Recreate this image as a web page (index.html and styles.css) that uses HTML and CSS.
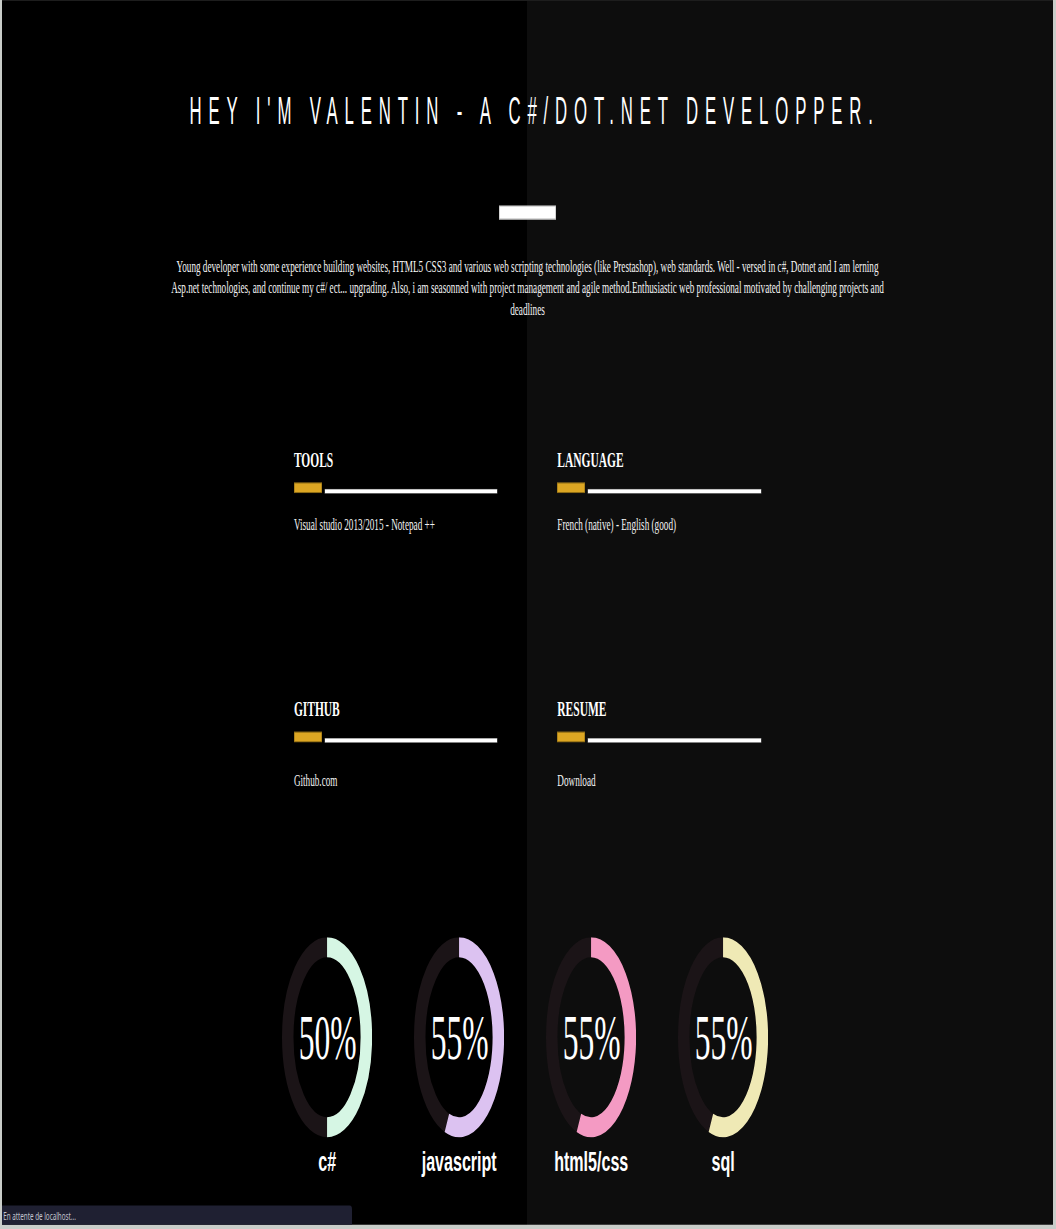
FILE: index.html
```html
<!DOCTYPE html>
<html lang="en">
<head>
<meta charset="utf-8">
<title>Valentin - C#/Dot.net developer</title>
<link rel="stylesheet" href="styles.css">
</head>
<body>
<div class="page">
  <h1 class="title">HEY I'M VALENTIN - A C#/DOT.NET DEVELOPPER.</h1>
  <div class="rule"></div>
  <p class="intro">Young developer with some experience building websites, HTML5 CSS3 and various web scripting technologies (like Prestashop), web standards. Well - versed in c#, Dotnet and I am lerning Asp.net technologies, and continue my c#/ ect... upgrading. Also, i am seasonned with project management and agile method.Enthusiastic web professional motivated by challenging projects and deadlines</p>

  <div class="skills">
    <section class="skill">
      <h3 class="skill-title">TOOLS</h3>
      <div class="bar"><span class="bar-gold"></span><span class="bar-line"></span></div>
      <p class="skill-text">Visual studio 2013/2015 - Notepad ++</p>
    </section>
    <section class="skill">
      <h3 class="skill-title">LANGUAGE</h3>
      <div class="bar"><span class="bar-gold"></span><span class="bar-line"></span></div>
      <p class="skill-text">French (native) - English (good)</p>
    </section>
    <section class="skill">
      <h3 class="skill-title">GITHUB</h3>
      <div class="bar"><span class="bar-gold"></span><span class="bar-line"></span></div>
      <p class="skill-text skill-link"><a href="#">Github.com</a></p>
    </section>
    <section class="skill">
      <h3 class="skill-title">RESUME</h3>
      <div class="bar"><span class="bar-gold"></span><span class="bar-line"></span></div>
      <p class="skill-text skill-link"><a href="#">Download</a></p>
    </section>
  </div>

  <div class="gauges">
    <div class="gauge">
      <div class="dial">
        <svg width="157" height="200" viewBox="0 0 157 200">
          <ellipse cx="78.5" cy="100" rx="68.5" ry="90" fill="none" stroke="#1b1417" stroke-width="20"/>
          <path d="M78.5,10 A68.5,90 0 0 1 78.5,190" fill="none" stroke="#d6f6e4" stroke-width="20"/>
        </svg>
        <span class="pct">50%</span>
      </div>
      <div class="label">c#</div>
    </div>
    <div class="gauge">
      <div class="dial">
        <svg width="157" height="200" viewBox="0 0 157 200">
          <ellipse cx="78.5" cy="100" rx="68.5" ry="90" fill="none" stroke="#1b1417" stroke-width="20"/>
          <path d="M78.5,10 A68.5,90 0 1 1 57.33,185.6" fill="none" stroke="#dcc2f1" stroke-width="20"/>
        </svg>
        <span class="pct">55%</span>
      </div>
      <div class="label">javascript</div>
    </div>
    <div class="gauge">
      <div class="dial">
        <svg width="157" height="200" viewBox="0 0 157 200">
          <ellipse cx="78.5" cy="100" rx="68.5" ry="90" fill="none" stroke="#1b1417" stroke-width="20"/>
          <path d="M78.5,10 A68.5,90 0 1 1 57.33,185.6" fill="none" stroke="#f49ac3" stroke-width="20"/>
        </svg>
        <span class="pct">55%</span>
      </div>
      <div class="label">html5/css</div>
    </div>
    <div class="gauge">
      <div class="dial">
        <svg width="157" height="200" viewBox="0 0 157 200">
          <ellipse cx="78.5" cy="100" rx="68.5" ry="90" fill="none" stroke="#1b1417" stroke-width="20"/>
          <path d="M78.5,10 A68.5,90 0 1 1 57.33,185.6" fill="none" stroke="#efe9b5" stroke-width="20"/>
        </svg>
        <span class="pct">55%</span>
      </div>
      <div class="label">sql</div>
    </div>
  </div>

  <div class="status">En attente de localhost...</div>
</div>
</body>
</html>
```

FILE: styles.css
```css
html, body {
  margin: 0;
  padding: 0;
  overflow: hidden;
}

body {
  background: #c9cdc9;
  height: 1229px;
  padding-left: 2px;
  box-sizing: border-box;
}

/* The page is drawn horizontally condensed: zoom shrinks it uniformly,
   the vertical transform restores the original height. */
.page {
  position: relative;
  box-sizing: border-box;
  width: 1831px;
  height: 1225px;
  zoom: 0.574;
  transform: scaleY(1.742160);
  transform-origin: 0 0;
  box-shadow: inset 0 1px 0 #1d1d1d;
  background: linear-gradient(90deg, #000000 0, #000000 50%, #0d0d0d 50%, #0d0d0d 100%);
  display: flex;
  flex-direction: column;
  align-items: center;
  color: #ffffff;
}

.title {
  margin: 93px 0 0;
  padding-left: 31px;
  font-family: "Liberation Sans", Arial, sans-serif;
  font-weight: 400;
  font-size: 39px;
  line-height: 39px;
  letter-spacing: 15.9px;
  white-space: nowrap;
  color: #ffffff;
  transform: scaleX(0.75);
}

.rule {
  width: 101px;
  height: 13px;
  margin-top: 74px;
  background: #ffffff;
  box-shadow: inset 0 0 0 1px #b4b4b4;
}

.intro {
  width: 1262px;
  margin: 36.4px 0 0;
  font-family: "Liberation Serif", "Times New Roman", serif;
  font-size: 16px;
  line-height: 22.4px;
  text-align: center;
  color: #f4f4f4;
}

.skills {
  display: grid;
  grid-template-columns: 355px 355px;
  column-gap: 104px;
  row-gap: 162.45px;
  margin-top: 126.6px;
}

.skill-title {
  margin: 0;
  font-family: "Liberation Serif", "Times New Roman", serif;
  font-weight: 700;
  font-size: 20px;
  line-height: 24px;
  color: #ffffff;
}

.bar {
  display: flex;
  align-items: flex-end;
  gap: 5px;
  margin-top: 8.75px;
  height: 12px;
}

.bar-gold {
  width: 49px;
  height: 12px;
  background: #dca623;
  box-shadow: inset 0 0 0 1px #8e6c14;
}

.bar-line {
  width: 300px;
  height: 4px;
  background: #ffffff;
  box-shadow: 0 0 0 0.6px #8a8a8a;
}

.skill-text {
  margin: 19.4px 0 0;
  font-family: "Liberation Serif", "Times New Roman", serif;
  font-size: 16px;
  line-height: 22.4px;
  color: #f2f2f2;
}

.skill-link {
  margin-top: 26.4px;
}

.skill-link a {
  color: #f2f2f2;
  text-decoration: none;
}

.gauges {
  display: flex;
  gap: 73px;
  margin-top: 145.2px;
  padding-right: 8px;
}

.gauge {
  width: 157px;
  display: flex;
  flex-direction: column;
  align-items: center;
}

.dial {
  display: grid;
  width: 157px;
  height: 200px;
}

.dial > svg,
.dial > .pct {
  grid-area: 1 / 1;
}

.dial > svg {
  display: block;
}

.pct {
  align-self: start;
  justify-self: center;
  margin-top: 71px;
  font-family: "Liberation Serif", "Times New Roman", serif;
  font-size: 64px;
  line-height: 64px;
  color: #ffffff;
  white-space: nowrap;
  transform: scaleX(0.86);
}

.label {
  margin-top: 7.8px;
  font-family: "Liberation Sans", Arial, sans-serif;
  font-weight: 700;
  font-size: 28px;
  line-height: 32px;
  color: #ffffff;
  white-space: nowrap;
}

.status {
  position: absolute;
  left: 0;
  bottom: 0;
  box-sizing: border-box;
  width: 610px;
  height: 20px;
  padding-left: 2px;
  background: #1f2032;
  border-top-right-radius: 4px;
  font-family: "Noto Sans", "Open Sans", sans-serif;
  font-size: 11px;
  line-height: 20px;
  color: #c3c4cf;
  white-space: nowrap;
}
```
